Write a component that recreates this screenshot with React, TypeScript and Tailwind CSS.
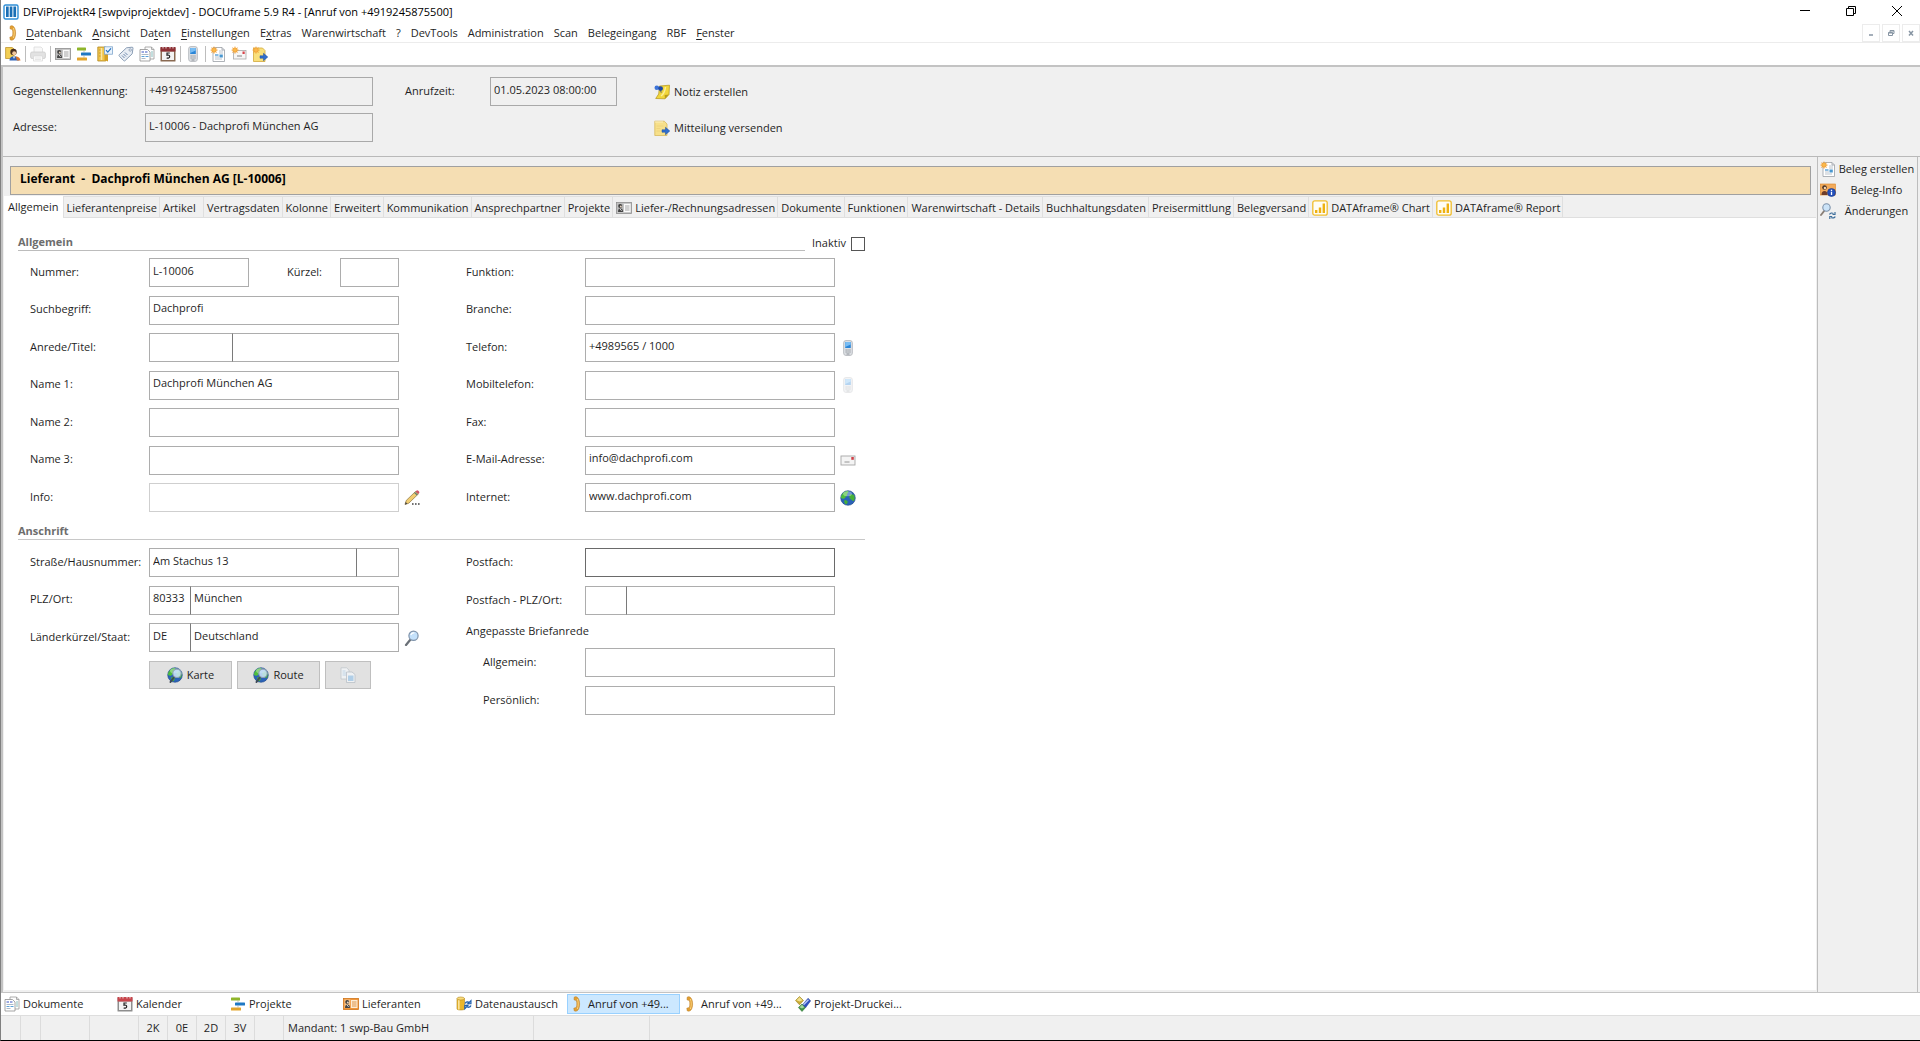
import React, { useState } from 'react';
import { clsx } from 'clsx';

type IconProps = React.SVGProps<SVGSVGElement>;

const Svg = ({ children, className, ...rest }: IconProps) => (
  <svg width="16" height="16" viewBox="0 0 16 16" fill="none" aria-hidden="true" className={clsx('shrink-0', className)} {...rest}>
    {children}
  </svg>
);

const AppIcon = () => (
  <Svg>
    <rect x="1" y="1" width="14" height="14" rx="1.5" fill="#fff" stroke="#2f8fd6" strokeWidth="1.4" />
    <path d="M3 2.5h2.7v10.5H3zM6.7 2.5h2.7v10.5H6.7zM10.4 2.5h2.7v10.5h-2.7z" fill="#1a6fb5" />
  </Svg>
);

const HandsetIcon = () => (
  <Svg>
    <path d="M5.200 1.200c1.200-.8 2.800-.6 3.600.6C10.200 3.600 10.600 5.800 10.600 8s-.4 4.400-1.600 6c-.8 1.200-2.600 1.400-3.800.8l-.4-2.600 2.600-.8c.6-2.200.6-4.600 0-6.800l-2.400-.8z" fill="#e2a033" stroke="#b9761a" strokeWidth=".5" />
    <path d="M8.400 3c1.100 3 1.100 7 0 10" stroke="#fbd88a" strokeWidth=".9" />
  </Svg>
);

const UserFolderIcon = () => (
  <Svg>
    <path d="M.6 1.500h6.500l2 1.500v9.500H.6z" fill="#f3cf55" stroke="#b98b1c" strokeWidth=".7" />
    <circle cx="8.500" cy="6" r="3.200" fill="#4a3020" />
    <circle cx="9.200" cy="7.300" r="2" fill="#f2c79c" />
    <path d="M4.500 14.500c0-3 2-4.300 4.500-4.300s4 1 5 4.300z" fill="#2f62b5" />
    <path d="M10.500 10.300c3 .3 4.500 1.700 5 4.200h-3.500z" fill="#d9742b" />
    <path d="M8 10.500h2l-1 2.500z" fill="#fff" />
  </Svg>
);

const PrinterIcon = () => (
  <Svg opacity=".6">
    <path d="M4 1h7l1.500 1.500V7H4z" fill="#f4f4f4" stroke="#bdbdbd" strokeWidth=".7" />
    <rect x=".6" y="6" width="14.800" height="6.500" rx="1.500" fill="#cfcfcf" stroke="#a5a5a5" strokeWidth=".7" />
    <path d="M3.500 10h9v5h-9z" fill="#fafafa" stroke="#bdbdbd" strokeWidth=".7" />
    <path d="M5 12h6M5 13.500h6" stroke="#c9c9c9" strokeWidth=".7" />
  </Svg>
);

const CardIcon = ({ tone = 'grey' }: { tone?: 'grey' | 'orange' }) => (
  <Svg>
    <rect x=".5" y="2.500" width="15" height="11" fill={tone === 'grey' ? '#c9c9c9' : '#f0963a'} stroke={tone === 'grey' ? '#8d8d8d' : '#cf7419'} strokeWidth=".8" />
    <rect x="8" y="4" width="6.500" height="8" fill={tone === 'grey' ? '#fbfbfb' : '#fdebd2'} />
    <path d="M9 6h4.500M9 8h4.500M9 10h4.500" stroke={tone === 'grey' ? '#9b9b9b' : '#d98a3a'} strokeWidth=".9" />
    <rect x="1.500" y="3.500" width="5.800" height="8.500" fill={tone === 'grey' ? '#b5b5b5' : '#f7c48a'} />
    <circle cx="4.200" cy="5.900" r="2" fill="#3b3b3b" />
    <circle cx="4.800" cy="6.400" r="1" fill="#e6d3bf" />
    <path d="M2 12c0-2.400 1-3.400 2.500-3.400S7 9.600 7 12z" fill="#444" />
    <path d="M4 9l1.600 1.800" stroke="#eee" strokeWidth=".9" />
  </Svg>
);

const BarsIcon = () => (
  <Svg>
    <rect x="1" y="1.500" width="9" height="3" rx=".6" fill="#8fb52b" />
    <rect x="5" y="6.500" width="10" height="3" rx=".6" fill="#1f78c4" />
    <rect x="1" y="11.500" width="10" height="3" rx=".6" fill="#e3a52c" />
    <path d="M8 4.500v2M8 9.500v2" stroke="#999" strokeWidth=".6" />
  </Svg>
);

const CabinetIcon = () => (
  <Svg>
    <path d="M.8 1h8v14h-8z" fill="#f0c44a" stroke="#b28820" strokeWidth=".8" />
    <path d="M7.500 1l3.500 1.500v13L7.500 14z" fill="#d39f24" />
    <path d="M4.500 2v12" stroke="#fae7a6" strokeWidth="1.500" />
    <path d="M2 4h1.500M2 7h1.500M2 10h1.500" stroke="#c2942a" strokeWidth=".9" />
    <rect x="7.500" y=".8" width="8" height="7.400" fill="#eaf3fc" stroke="#7fa6cc" strokeWidth=".8" />
    <path d="M9 4.200l1.800 2L14 2.400" stroke="#2272c3" strokeWidth="1.200" />
  </Svg>
);

const TagIcon = () => (
  <Svg>
    <path d="M8.500 1.800l5.500-.6c.8 0 1 .3 1 1l-.8 5.600-7 6.700c-.6.600-1.200.600-1.700 0L1.400 10.200c-.5-.5-.5-1.100 0-1.700z" fill="#e9eef5" stroke="#7e93ad" strokeWidth=".9" />
    <circle cx="12.200" cy="4" r="1.200" fill="#fff" stroke="#7e93ad" strokeWidth=".8" />
    <path d="M4 9.500l2.500 2.500M5.500 8l2.500 2.500M7 6.500l2.500 2.500" stroke="#5d7ba1" strokeWidth=".9" />
  </Svg>
);

const DocsIcon = () => (
  <Svg>
    <path d="M6 1h6.500L15 3.500V13H6z" fill="#fdfdfd" stroke="#9a9a9a" strokeWidth=".8" />
    <path d="M12.500 1v2.500H15" stroke="#9a9a9a" strokeWidth=".8" />
    <path d="M12 6h2M12 8h2M12 10h2" stroke="#6db0b0" strokeWidth=".8" />
    <path d="M1 3.500h7.500L11 6v9H1z" fill="#fff" stroke="#8f8f8f" strokeWidth=".8" />
    <path d="M2.500 6h2.500M6 6h2.500" stroke="#3b55c4" strokeWidth="1.200" />
    <path d="M2.500 8.500h7M2.500 12.500h4" stroke="#9aa8b8" strokeWidth=".8" />
    <path d="M2.500 10.500h3M6.500 10.500H9.500" stroke="#5aa0d8" strokeWidth="1.200" />
  </Svg>
);

const CalendarIcon = ({ tone = 'dark' }: { tone?: 'dark' | 'light' }) => (
  <Svg>
    <rect x=".5" y="1.500" width="15" height="14" rx=".6" fill={tone === 'dark' ? '#8a6a52' : '#8e8e8e'} />
    <rect x="2" y="5.500" width="12" height="8.500" fill="#f3f3f3" />
    <rect x=".5" y="1" width="15" height="4.500" fill={tone === 'dark' ? '#8f3035' : '#c8454b'} />
    <path d="M3 .5v2M6 .5v2M10 .5v2M13 .5v2" stroke="#eee" strokeWidth=".9" />
    <path d="M9.800 7H7v2.200c1.500-.4 2.700 0 2.700 1.400 0 1.500-1.600 1.900-3 1.300" stroke="#222" strokeWidth="1.200" />
  </Svg>
);

const PhoneIcon = ({ disabled = false }: { disabled?: boolean }) => (
  <Svg opacity={disabled ? 0.35 : 1}>
    <rect x="3.600" y=".5" width="8.800" height="15" rx="2.400" fill="#dcdfe3" stroke="#b1b5ba" strokeWidth=".8" />
    <rect x="5.200" y="2" width="5.600" height="6" fill="#2a86d8" />
    <path d="M5.200 2h5.600v2.500L5.200 7z" fill="#79bdf3" />
    <path d="M5.500 10h1.300M7.400 10h1.300M9.300 10h1.300M5.500 12h1.300M7.400 12h1.300M9.300 12h1.300M6.500 14h3" stroke="#8b9097" strokeWidth="1" />
  </Svg>
);

const Spark = () => (
  <>
    <path d="M4 0l.9 2.200L7 1.200 6 3.300 8.200 4 6 4.900l1 2.100-2.100-1L4 8.200 3.100 6 1 7l1-2.100L-.2 4 2 3.300 1 1.200l2.100 1z" fill="#f2a23a" />
    <circle cx="4" cy="4" r="1.800" fill="#f9b94c" />
  </>
);

const NewDocIcon = () => (
  <Svg>
    <path d="M3 1.500h9L14.500 4v11.500H3z" fill="#fff" stroke="#9aa0a6" strokeWidth=".8" />
    <path d="M12 1.500V4h2.500" stroke="#9aa0a6" strokeWidth=".8" />
    <path d="M9 5h4M9 7h4M5 11h4M5 13h7" stroke="#a9b4bf" strokeWidth=".8" />
    <path d="M5 9h3.500" stroke="#3b8fd0" strokeWidth="1.200" />
    <rect x="9.500" y="8.500" width="3.300" height="3" fill="#4a97cf" />
    <Spark />
  </Svg>
);

const NewMailIcon = () => (
  <Svg>
    <rect x="2.500" y="4.500" width="12.500" height="8.500" fill="#f6f6f6" stroke="#a9a9a9" strokeWidth=".8" />
    <rect x="11.500" y="5.500" width="2.200" height="2.500" fill="#d9434a" />
    <path d="M6 10h5" stroke="#777" strokeWidth=".9" />
    <Spark />
  </Svg>
);

const BlueArrow = () => (
  <path d="M8 9.800h3.500V7.300L15.800 11l-4.300 3.700v-2.500H8z" fill="#2f6fd0" stroke="#1b4c9c" strokeWidth=".5" />
);

const NewNoteIcon = () => (
  <Svg>
    <path d="M1.500 2h9L13 4.500v11H1.500z" fill="#f9e07c" stroke="#d2a83a" strokeWidth=".8" />
    <Spark />
    <BlueArrow />
  </Svg>
);

const SendNoteIcon = () => (
  <Svg>
    <path d="M.8 1.200h9.500L13 4v11.500H.8z" fill="#f7e08a" stroke="#d8b95a" strokeWidth=".8" />
    <path d="M2 .8v2M4 .8v2M6 .8v2M8 .8v2" stroke="#fff6cf" strokeWidth=".9" />
    <path d="M2.500 6h7M2.500 8.500h4M2.500 11h4" stroke="#ecd07a" strokeWidth=".8" />
    <BlueArrow />
  </Svg>
);

const PinNoteIcon = () => (
  <Svg>
    <path d="M5.500 2l10-.8-.5 9.300-4 4.300-9.300-.3 3-4.500z" fill="#f1d63c" stroke="#b39316" strokeWidth=".7" />
    <path d="M11 14.800l-.4-3.800 4.400-.5z" fill="#b99a1b" />
    <path d="M7 12c3-2 4-5 4.500-9" stroke="#fbef9a" strokeWidth="1.500" />
    <circle cx="2.800" cy="3.800" r="2.300" fill="#3c74d8" />
    <circle cx="6.600" cy="4.600" r="2.400" fill="#1d49a8" />
    <path d="M6.600 6.500l.6 2.200" stroke="#44506b" strokeWidth=".9" />
  </Svg>
);

const PencilIcon = () => (
  <Svg>
    <path d="M1 14.500l1.200-4L11.500 1.500l2.800 2.500-9.500 9.200z" fill="#f1cd72" stroke="#8a7340" strokeWidth=".7" />
    <path d="M1 14.500l.7-2.400 1.700 1.700z" fill="#444" />
    <path d="M11.500 1.500l1.200-1.100c1-.6 3.100 1.300 2.600 2.400L14.300 4z" fill="#d0566a" />
    <path d="M10.500 2.500l2.800 2.500" stroke="#5f7f77" strokeWidth="1.300" />
    <path d="M8 14h1.600M11 14h1.600M14 14h1.600" stroke="#444" strokeWidth="1.600" />
  </Svg>
);

const MailIcon = () => (
  <Svg>
    <rect x="1" y="4" width="14" height="9" fill="#f4f4f4" stroke="#a6a6a6" strokeWidth=".9" />
    <rect x="11.300" y="5" width="2.500" height="2.800" fill="#cf3f47" />
    <path d="M4.500 10h5" stroke="#8a8a8a" strokeWidth=".9" />
  </Svg>
);

const GlobeShape = () => (
  <>
    <circle cx="8" cy="8" r="7.300" fill="#2b62b8" stroke="#1f4a86" strokeWidth=".6" />
    <path d="M2 4.500c2-3 5-3.800 6.500-3.200-.2 1.700-1.500 2-1.500 3.700 0 1.500-1.500 1.500-2 3-.5 1-2.500 1-4 0 0-1.500.3-2.500 1-3.500z" fill="#4fbe3c" />
    <path d="M10 4.500c1.500-.8 3 0 4 .5 1.200 2.500.8 4.500-.3 6-1.500.3-1.700-1.300-3-1.700-1.500-.6-2-3.600-.7-4.800zM4.500 10c1.500-.3 3.500.8 3.200 2.200-.3 1-.8 1.800-1.500 2.300-1.500-.6-2.500-2.500-1.700-4.500z" fill="#46b038" />
    <ellipse cx="7.500" cy="3.800" rx="4.500" ry="2.500" fill="#fff" opacity=".35" />
  </>
);

const GlobeIcon = () => (
  <Svg>
    <GlobeShape />
  </Svg>
);

const GlobeSearchIcon = () => (
  <Svg>
    <GlobeShape />
    <path d="M7.500 9.500L3.500 15" stroke="#3f4a55" strokeWidth="2" strokeLinecap="round" />
    <circle cx="10" cy="6.300" r="4.200" fill="#cfe8fb" fillOpacity=".85" stroke="#8fa3b5" strokeWidth="1.100" />
  </Svg>
);

const LoupeIcon = () => (
  <Svg>
    <path d="M6.500 9.500L2 15" stroke="#6a7077" strokeWidth="2.200" strokeLinecap="round" />
    <circle cx="9.500" cy="5.800" r="4.600" fill="#c4e1fb" stroke="#7f93ab" strokeWidth="1.200" />
    <path d="M6.800 5c.6-1.500 2-2.300 3.600-2" stroke="#fff" strokeWidth="1.200" />
  </Svg>
);

const CopyIcon = () => (
  <Svg opacity=".7">
    <path d="M1 .8h5.500L9 3v9H1z" fill="#f6f9fc" stroke="#b4bcc4" strokeWidth=".8" />
    <path d="M2.500 4h3M2.500 6h4M2.500 8h4" stroke="#9fc4e4" strokeWidth=".8" />
    <path d="M6.500 5H12l3 2.500v8H6.500z" fill="#f6f9fc" stroke="#a9b3bd" strokeWidth=".8" />
    <path d="M8 8.500h5.500v5.500H8z" fill="#9cc6ea" />
  </Svg>
);

const ChartIcon = () => (
  <Svg>
    <rect x=".8" y=".8" width="14.400" height="14.400" rx="2" fill="#fffdf5" stroke="#f0bd2e" strokeWidth="1.300" />
    <path d="M3 10h2.400v3H3zM6.800 7.500h2.400V13H6.800zM10.600 3.500H13V13h-2.400z" fill="#eeb111" />
  </Svg>
);

const CardInfoIcon = () => (
  <Svg>
    <rect x=".4" y="2" width="15" height="11" fill="#f3ab5c" stroke="#d98324" strokeWidth=".6" />
    <circle cx="4.500" cy="5.500" r="2.300" fill="#473227" />
    <circle cx="4.900" cy="6" r="1.200" fill="#f2d3b3" />
    <path d="M1.500 13c0-3 1.200-4 3-4s3 1 3 4z" fill="#6d3d2b" />
    <circle cx="11.500" cy="10.500" r="4" fill="#2450bb" stroke="#15358a" strokeWidth=".6" />
    <path d="M11.500 9.800v3.200M11.500 7.700v1.200" stroke="#fff" strokeWidth="1.300" />
  </Svg>
);

const LoupeSyncIcon = () => (
  <Svg>
    <path d="M4.500 7.500L1 12" stroke="#8a7f76" strokeWidth="1.900" strokeLinecap="round" />
    <circle cx="6.500" cy="4.500" r="3.700" fill="#cbe3f8" stroke="#7d92aa" strokeWidth="1.100" />
    <path d="M9.500 11.500c.5-1.600 2.500-1.900 4-1M15 9v2.500h-2.500M15.200 13.500c-.5 1.500-2.600 1.800-4 1M9.800 16v-2.500h2.400" stroke="#3f6f9c" strokeWidth="1.200" />
  </Svg>
);

const DbSyncIcon = () => (
  <Svg>
    <path d="M1 2.500v10.500c0 1.300 7.500 1.300 7.500 0V2.500z" fill="#eab62b" stroke="#b4861a" strokeWidth=".6" />
    <path d="M2.800 3.500v10" stroke="#fbe39a" strokeWidth="1.700" />
    <ellipse cx="4.700" cy="2.500" rx="3.700" ry="1.500" fill="#f8db7c" stroke="#b4861a" strokeWidth=".6" />
    <path d="M9 7.500c1-2.200 3.300-2 4.500-.6M15 4.500v3.300h-3.200zM15 9.500c-.8 2.200-3.200 2.300-4.600.9M8.800 12.800V9.400H12z" stroke="#1f5fae" strokeWidth="1.100" fill="#1f5fae" fillOpacity=".4" />
  </Svg>
);

const TilesIcon = () => (
  <Svg>
    <path d="M4.500.5l4 4-4 4.300-4-4.300z" fill="#c9aa33" stroke="#9b8220" strokeWidth=".6" />
    <path d="M4.500 1.200l3 3-3 1.300-3-1.300z" fill="#f2e290" />
    <path d="M7 8l3.600 3.500L7 15.500l-3.600-4z" fill="#3f9145" stroke="#226e29" strokeWidth=".5" />
    <path d="M7 8.800l2.400 2.400L7 12.600l-2.500-1.400z" fill="#a3d6a0" />
    <path d="M13 2.300l2.700 2.500-5 6.700L7.800 8.500z" fill="#2f4fc0" stroke="#1b3b8c" strokeWidth=".5" />
    <path d="M13 3.200l1 1-5 5-.9-.9z" fill="#b4c6f6" />
  </Svg>
);

interface FieldProps {
  id: string;
  label: string;
  value?: string;
  labelClass?: string;
  inputClass?: string;
  children?: React.ReactNode;
}

const inputBase = 'h-[29px] min-w-0 border border-[#adadad] bg-white pr-1 pb-[5px] pl-[3px] outline-none';

const Field = ({ id, label, value = '', labelClass = 'w-[119px]', inputClass = 'w-[250px]', children }: FieldProps) => (
  <div className="flex items-center">
    <label htmlFor={id} className={clsx('shrink-0 pb-[2px]', labelClass)}>{label}</label>
    <input id={id} defaultValue={value} className={clsx(inputBase, inputClass)} />
    {children}
  </div>
);

interface SplitFieldProps {
  id: string;
  label: string;
  values: [string, string];
  firstClass: string;
  children?: React.ReactNode;
}

// two inputs that share one frame, e.g. PLZ and Ort
const SplitField = ({ id, label, values, firstClass, children }: SplitFieldProps) => (
  <div className="flex items-center">
    <label htmlFor={id} className="w-[119px] shrink-0 pb-[2px]">{label}</label>
    <div className="flex w-[250px]">
      <input id={id} defaultValue={values[0]} className={clsx(inputBase, firstClass, 'border-r-[#7a7a7a]')} />
      <input aria-label={`${label} 2`} defaultValue={values[1]} className={clsx(inputBase, 'flex-1 border-l-0')} />
    </div>
    {children}
  </div>
);

const IconButton = ({ label, children }: { label: string; children: React.ReactNode }) => (
  <button type="button" aria-label={label} className="ml-1 shrink-0 p-px">{children}</button>
);

// [before, mnemonic, after]
const menus: Array<[string, string, string]> = [
  ['', 'D', 'atenbank'],
  ['', 'A', 'nsicht'],
  ['Da', 't', 'en'],
  ['', 'E', 'instellungen'],
  ['E', 'x', 'tras'],
  ['Warenwirtschaft', '', ''],
  ['?', '', ''],
  ['DevTools', '', ''],
  ['Administration', '', ''],
  ['Scan', '', ''],
  ['Belegeingang', '', ''],
  ['RBF', '', ''],
  ['', 'F', 'enster'],
];

const toolbar: Array<Array<{ name: string; icon: React.ReactNode }>> = [
  [{ name: 'Adressen', icon: <UserFolderIcon /> }],
  [{ name: 'Drucken', icon: <PrinterIcon /> }],
  [
    { name: 'Kontakte', icon: <CardIcon /> },
    { name: 'Projekte', icon: <BarsIcon /> },
    { name: 'Aufgaben', icon: <CabinetIcon /> },
    { name: 'Artikel', icon: <TagIcon /> },
    { name: 'Dokumente', icon: <DocsIcon /> },
    { name: 'Kalender', icon: <CalendarIcon /> },
  ],
  [{ name: 'Telefon', icon: <PhoneIcon /> }],
  [
    { name: 'Neues Dokument', icon: <NewDocIcon /> },
    { name: 'Neue E-Mail', icon: <NewMailIcon /> },
    { name: 'Neue Mitteilung', icon: <NewNoteIcon /> },
  ],
];

const tabs: Array<{ name: string; icon?: React.ReactNode }> = [
  { name: 'Allgemein' },
  { name: 'Lieferantenpreise' },
  { name: 'Artikel' },
  { name: 'Vertragsdaten' },
  { name: 'Kolonne' },
  { name: 'Erweitert' },
  { name: 'Kommunikation' },
  { name: 'Ansprechpartner' },
  { name: 'Projekte' },
  { name: 'Liefer-/Rechnungsadressen', icon: <CardIcon /> },
  { name: 'Dokumente' },
  { name: 'Funktionen' },
  { name: 'Warenwirtschaft - Details' },
  { name: 'Buchhaltungsdaten' },
  { name: 'Preisermittlung' },
  { name: 'Belegversand' },
  { name: 'DATAframe® Chart', icon: <ChartIcon /> },
  { name: 'DATAframe® Report', icon: <ChartIcon /> },
];

const sideLinks = [
  { name: 'Beleg erstellen', icon: <NewDocIcon /> },
  { name: 'Beleg-Info', icon: <CardInfoIcon /> },
  { name: 'Änderungen', icon: <LoupeSyncIcon /> },
];

const openWindows = [
  { name: 'Dokumente', icon: <DocsIcon /> },
  { name: 'Kalender', icon: <CalendarIcon tone="light" /> },
  { name: 'Projekte', icon: <BarsIcon /> },
  { name: 'Lieferanten', icon: <CardIcon tone="orange" /> },
  { name: 'Datenaustausch', icon: <DbSyncIcon /> },
  { name: 'Anruf von +49...', icon: <HandsetIcon />, active: true },
  { name: 'Anruf von +49...', icon: <HandsetIcon /> },
  { name: 'Projekt-Druckei...', icon: <TilesIcon /> },
];

const TitleBar = () => (
  <header className="flex h-6 items-center pl-[2px] text-black">
    <AppIcon />
    <h1 className="ml-1 flex-1 text-[11px]">DFViProjektR4 [swpviprojektdev] - DOCUframe 5.9 R4 - [Anruf von +4919245875500]</h1>
    <button type="button" aria-label="Minimieren" className="flex h-5 w-[46px] justify-center pt-1">
      <svg width="10" height="10" viewBox="0 0 10 10" stroke="#000"><path d="M0 4.500h10" /></svg>
    </button>
    <button type="button" aria-label="Verkleinern" className="flex h-5 w-[46px] justify-center pt-1">
      <svg width="10" height="10" viewBox="0 0 10 10" fill="none" stroke="#000"><path d="M.5 2.500h7v7h-7zM2.500 2.500v-2h7v7h-2" /></svg>
    </button>
    <button type="button" aria-label="Schließen" className="flex h-5 w-[46px] justify-center pt-1">
      <svg width="10" height="10" viewBox="0 0 10 10" stroke="#000"><path d="M0 0l10 10M10 0L0 10" /></svg>
    </button>
  </header>
);

const MenuBar = () => (
  <nav className="flex h-[19px] items-center border-b border-[#ececec] pl-1">
    <HandsetIcon />
    <div className="ml-[5px] flex flex-1 gap-[10px]">
      {menus.map(([before, key, after]) => (
        <button key={before + key + after} type="button" className="whitespace-nowrap">
          {before}<u className="underline-offset-2">{key}</u>{after}
        </button>
      ))}
    </div>
    <div className="flex gap-[2px]">
      <button type="button" aria-label="Fenster minimieren" className="flex h-[18px] w-[18px] items-center justify-center border border-[#ececec]">
        <svg width="8" height="8" viewBox="0 0 8 8" stroke="#8795a3"><path d="M2 6h4" strokeWidth="1.500" /></svg>
      </button>
      <button type="button" aria-label="Fenster verkleinern" className="flex h-[18px] w-[18px] items-center justify-center border border-[#ececec]">
        <svg width="8" height="8" viewBox="0 0 8 8" fill="none" stroke="#8795a3"><path d="M1.500 3.500h4v3h-4zM3 3V1.500h4v3H6M1.500 4h4M3 2h4" /></svg>
      </button>
      <button type="button" aria-label="Fenster schließen" className="flex h-[18px] w-[18px] items-center justify-center border border-[#ececec]">
        <svg width="8" height="8" viewBox="0 0 8 8" stroke="#8795a3"><path d="M2 2l4 4.500M6 2L2 6.500" strokeWidth="1.500" /></svg>
      </button>
    </div>
  </nav>
);

const ToolBar = () => (
  <div className="flex h-6 items-center border-b-2 border-[#c3c3c3] pl-1">
    {toolbar.map((group, idx) => (
      <div key={idx} className={clsx('flex items-center gap-[5px]', idx > 0 && 'ml-1 border-l border-[#bdbdbd] pl-1')}>
        {group.map((item) => (
          <button key={item.name} type="button" aria-label={item.name}>{item.icon}</button>
        ))}
      </div>
    ))}
  </div>
);

interface ReadOnlyFieldProps {
  id: string;
  label: string;
  value: string;
  labelClass: string;
  inputClass: string;
}

const ReadOnlyField = ({ id, label, value, labelClass, inputClass }: ReadOnlyFieldProps) => (
  <div className="flex items-center">
    <label htmlFor={id} className={clsx('pb-[2px]', labelClass)}>{label}</label>
    <input id={id} readOnly value={value} className={clsx('h-[29px] border border-[#a9a9a9] pb-[5px] pl-[3px] outline-none', inputClass)} />
  </div>
);

const CallInfo = () => (
  <section className="flex h-[90px] items-start border-b border-[#b9b9b9] pt-[10px] pl-[10px]">
    <div className="flex flex-col gap-[7px]">
      <ReadOnlyField id="kennung" label="Gegenstellenkennung:" value="+4919245875500" labelClass="w-[132px]" inputClass="w-[228px]" />
      <ReadOnlyField id="adresse" label="Adresse:" value="L-10006 - Dachprofi München AG" labelClass="w-[132px]" inputClass="w-[228px]" />
    </div>
    <div className="ml-8">
      <ReadOnlyField id="anrufzeit" label="Anrufzeit:" value="01.05.2023 08:00:00" labelClass="w-[85px]" inputClass="w-[127px]" />
    </div>
    <div className="ml-[37px] flex flex-col gap-5 pt-[7px]">
      <button type="button" className="flex items-center gap-1"><PinNoteIcon />Notiz erstellen</button>
      <button type="button" className="flex items-center gap-1"><SendNoteIcon />Mitteilung versenden</button>
    </div>
  </section>
);

const GeneralForm = () => (
  <div className="w-[847px]">
    <div className="flex h-[17px] items-end">
      <h2 className="flex-1 border-b border-[#bcbcbc] font-bold text-[#6d6d6d]">Allgemein</h2>
      <label htmlFor="inaktiv" className="ml-[7px] w-[39px]">Inaktiv</label>
      <input id="inaktiv" type="checkbox" className="h-[14px] w-[14px] appearance-none border border-[#555]" />
    </div>
    <div className="mt-[7px] flex pl-3">
      <div className="flex h-[254px] w-[436px] flex-col justify-between">
        <div className="flex">
          <Field id="nummer" label="Nummer:" value="L-10006" inputClass="w-[100px]" />
          <div className="ml-[38px]">
            <Field id="kuerzel" label="Kürzel:" labelClass="w-[53px]" inputClass="w-[59px]" />
          </div>
        </div>
        <Field id="suchbegriff" label="Suchbegriff:" value="Dachprofi" />
        <SplitField id="anrede" label="Anrede/Titel:" values={['', '']} firstClass="w-[84px]" />
        <Field id="name1" label="Name 1:" value="Dachprofi München AG" />
        <Field id="name2" label="Name 2:" />
        <Field id="name3" label="Name 3:" />
        <Field id="info" label="Info:" inputClass="w-[250px] border-[#cfcfcf]">
          <IconButton label="Info bearbeiten"><PencilIcon /></IconButton>
        </Field>
      </div>
      <div className="flex h-[254px] flex-col justify-between">
        <Field id="funktion" label="Funktion:" />
        <Field id="branche" label="Branche:" />
        <Field id="telefon" label="Telefon:" value="+4989565 / 1000">
          <IconButton label="Anrufen"><PhoneIcon /></IconButton>
        </Field>
        <Field id="mobil" label="Mobiltelefon:">
          <IconButton label="Mobil anrufen"><PhoneIcon disabled /></IconButton>
        </Field>
        <Field id="fax" label="Fax:" />
        <Field id="email" label="E-Mail-Adresse:" value="info@dachprofi.com">
          <IconButton label="E-Mail schreiben"><MailIcon /></IconButton>
        </Field>
        <Field id="internet" label="Internet:" value="www.dachprofi.com">
          <IconButton label="Webseite öffnen"><GlobeIcon /></IconButton>
        </Field>
      </div>
    </div>
  </div>
);

const AddressForm = () => (
  <div className="mt-[11px] w-[847px]">
    <h2 className="border-b border-[#c8c8c8] font-bold text-[#6d6d6d]">Anschrift</h2>
    <div className="mt-2 flex pl-3">
      <div className="w-[436px]">
        <div className="flex h-[104px] flex-col justify-between">
          <SplitField id="strasse" label="Straße/Hausnummer:" values={['Am Stachus 13', '']} firstClass="w-[208px]" />
          <SplitField id="plz" label="PLZ/Ort:" values={['80333', 'München']} firstClass="w-[42px]" />
          <SplitField id="land" label="Länderkürzel/Staat:" values={['DE', 'Deutschland']} firstClass="w-[42px]">
            <IconButton label="Land suchen"><LoupeIcon /></IconButton>
          </SplitField>
        </div>
        <div className="mt-[9px] ml-[119px] flex gap-[5px]">
          <button type="button" className="flex h-7 w-[83px] items-center justify-center gap-1 border border-[#bfbfbf] bg-[#e1e1e1]"><GlobeSearchIcon />Karte</button>
          <button type="button" className="flex h-7 w-[83px] items-center justify-center gap-1 border border-[#bfbfbf] bg-[#e1e1e1]"><GlobeSearchIcon />Route</button>
          <button type="button" aria-label="Kopieren" className="flex h-7 w-[46px] items-center justify-center border border-[#bfbfbf] bg-[#e1e1e1]"><CopyIcon /></button>
        </div>
      </div>
      <div>
        <div className="flex h-[67px] flex-col justify-between">
          <Field id="postfach" label="Postfach:" inputClass="w-[250px] border-[#6a6a6a]!" />
          <SplitField id="postfachplz" label="Postfach - PLZ/Ort:" values={['', '']} firstClass="w-[42px]" />
        </div>
        <h3 className="mt-2 mb-[9px]">Angepasste Briefanrede</h3>
        <div className="flex h-[67px] flex-col justify-between">
          <Field id="briefAllgemein" label="Allgemein:" labelClass="w-[119px] pl-[17px]" />
          <Field id="briefPersoenlich" label="Persönlich:" labelClass="w-[119px] pl-[17px]" />
        </div>
      </div>
    </div>
  </div>
);

const StatusBar = () => (
  <footer className="flex h-[25px] border-t border-[#dedede] bg-[#f0f0f0]">
    <span className="w-5 border-r border-[#dcdcdc]" />
    <span className="w-5 border-r border-[#dcdcdc]" />
    <span className="w-[49px] border-r border-[#dcdcdc]" />
    <span className="w-[49px] border-r border-[#dcdcdc]" />
    {['2K', '0E', '2D', '3V', ''].map((code, idx) => (
      <span key={idx} className="flex w-[29px] items-center justify-center border-r border-[#dcdcdc]">{code}</span>
    ))}
    <span className="flex w-[250px] items-center border-r border-[#dcdcdc] pl-1">Mandant: 1 swp-Bau GmbH</span>
    <span className="w-[116px] border-r border-[#dcdcdc]" />
  </footer>
);

const App = () => {
  const [activeTab, setActiveTab] = useState('Allgemein');

  return (
    <div className="flex min-h-screen flex-col border-b border-l border-b-black border-l-[#808080] bg-white font-['Open_Sans',sans-serif] text-[11px] leading-4 text-[#1f1f1f]">
      <TitleBar />
      <MenuBar />
      <ToolBar />

      <div className="flex flex-1 flex-col border-b border-l-2 border-[#c3c3c3] bg-[#f0f0f0]">
        <CallInfo />
        <div className="flex flex-1">
          <main className="flex min-w-0 flex-1 flex-col pr-px">
            <div className="mt-[9px] mr-[5px] ml-[7px] flex h-[29px] items-center border border-[#a0a0a0] bg-[#f5deb3] px-[9px] pb-1 text-[12px] font-bold whitespace-pre text-black">
              {'Lieferant  -  Dachprofi München AG [L-10006]'}
            </div>
            <div role="tablist" className="mt-px flex h-[22px] pl-px">
              {tabs.map((tab) => (
                <button
                  key={tab.name}
                  type="button"
                  role="tab"
                  aria-selected={activeTab === tab.name}
                  onClick={() => setActiveTab(tab.name)}
                  className={clsx(
                    'flex min-w-[44px] shrink-0 items-center gap-[3px] border-r border-[#dfdfdf] whitespace-nowrap',
                    activeTab === tab.name ? 'bg-white px-1' : 'border-t border-b pt-px pr-[2px] pl-[3px]'
                  )}
                >
                  {tab.icon}
                  {tab.name}
                </button>
              ))}
              <span className="flex-1 border-b border-[#dfdfdf]" />
            </div>
            <div className="mb-[2px] ml-px flex-1 bg-white pt-4 pl-[14px]">
              <GeneralForm />
              <AddressForm />
            </div>
          </main>
          <aside className="mr-[2px] flex w-[101px] flex-col gap-[5px] border-r border-l border-[#bdbdbd] pt-1 pl-[2px]">
            {sideLinks.map((link) => (
              <button key={link.name} type="button" className="flex items-center">
                {link.icon}
                <span className="flex-1 text-center whitespace-nowrap">{link.name}</span>
              </button>
            ))}
          </aside>
        </div>
      </div>

      <nav className="flex h-[22px] items-center pl-px">
        {openWindows.map((win, idx) => (
          <button
            key={idx}
            type="button"
            className={clsx(
              'flex h-5 w-[113px] items-center gap-[3px] border pl-px whitespace-nowrap',
              win.active ? 'border-[#99d1ff] bg-[#cce8ff]' : 'border-transparent'
            )}
          >
            {win.icon}
            {win.name}
          </button>
        ))}
      </nav>
      <StatusBar />
    </div>
  );
};

export default App;
